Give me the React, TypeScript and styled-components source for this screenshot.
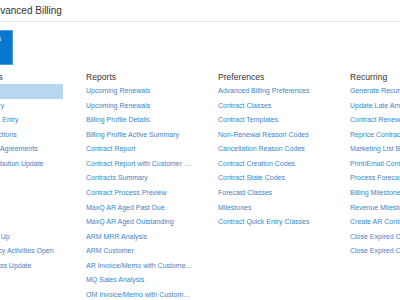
import styled, { createGlobalStyle } from 'styled-components'

const GlobalStyle = createGlobalStyle`
  html, body {
    margin: 0;
    padding: 0;
    overflow: hidden;
    background: #ffffff;
  }
  body {
    font-family: "Liberation Sans", Arial, sans-serif;
  }
`

const Page = styled.div`
  margin-left: -50px;
  width: 600px;
`

const Header = styled.header`
  height: 21px;
  border-bottom: 1px solid #e6e6e6;
  padding-left: 38px;
  display: flex;
  align-items: center;
`

const Title = styled.h1`
  margin: 0;
  font-size: 10px;
  font-weight: 400;
  color: #333333;
  line-height: 22px;
`

const Body = styled.div`
  padding-top: 8px;
`

const Tile = styled.div`
  margin-left: 4px;
  width: 59px;
  height: 35px;
  box-sizing: border-box;
  background: #0a78cf;
  border: 1px solid #4a9ee0;
  padding: 4px 3px;
  color: #ffffff;
  font-size: 7px;
  line-height: 8px;
  white-space: nowrap;
`

const Columns = styled.div`
  display: grid;
  grid-template-columns: repeat(4, 132px);
  margin-top: 5px;
`

const Column = styled.section`
  display: flex;
  flex-direction: column;
`

const Heading = styled.h2`
  margin: 0;
  padding-left: 4px;
  font-size: 8.6px;
  font-weight: 400;
  color: #333333;
  line-height: 14px;
`

const Item = styled.a<{ $active?: boolean }>`
  display: block;
  width: 113px;
  box-sizing: border-box;
  padding: 0 2px 0 4px;
  font-size: 7px;
  line-height: 14.57px;
  color: #3a86c8;
  text-decoration: none;
  white-space: nowrap;
  overflow: hidden;
  text-overflow: ellipsis;
  background: ${({ $active }) => ($active ? '#b7d7f1' : 'transparent')};
`

const groups: { title: string; items: string[] }[] = [
  {
    title: 'Transactions',
    items: [
      'Dashboard',
      'Contract History',
      'Quick Contract Entry',
      'Contract Collections',
      'Contract Price Agreements',
      'Revenue Distribution Update',
      'Contracts',
      'Invoices',
      'Credits',
      'Renewals',
      'Quotes Follow Up',
      'Collection Policy Activities Open',
      'Agreement Mass Update',
    ],
  },
  {
    title: 'Reports',
    items: [
      'Upcoming Renewals',
      'Upcoming Renewals',
      'Billing Profile Details',
      'Billing Profile Active Summary',
      'Contract Report',
      'Contract Report with Customer Details',
      'Contracts Summary',
      'Contract Process Preview',
      'MaxQ AR Aged Past Due',
      'MaxQ AR Aged Outstanding',
      'ARM MRR Analysis',
      'ARM Customer',
      'AR Invoice/Memo with Customer Details',
      'MQ Sales Analysis',
      'OM Invoice/Memo with Customer Details',
    ],
  },
  {
    title: 'Preferences',
    items: [
      'Advanced Billing Preferences',
      'Contract Classes',
      'Contract Templates',
      'Non-Renewal Reason Codes',
      'Cancellation Reason Codes',
      'Contract Creation Codes',
      'Contract State Codes',
      'Forecast Classes',
      'Milestones',
      'Contract Quick Entry Classes',
    ],
  },
  {
    title: 'Recurring',
    items: [
      'Generate Recurring Invoices',
      'Update Late Amendments',
      'Contract Renewals',
      'Reprice Contracts',
      'Marketing List Builder',
      'Print/Email Contracts',
      'Process Forecasts',
      'Billing Milestones',
      'Revenue Milestones',
      'Create AR Contracts',
      'Close Expired Contracts',
      'Close Expired Contract Lines',
    ],
  },
]

export default function App() {
  return (
    <>
      <GlobalStyle />
      <Page>
        <Header>
          <Title>Advanced Billing</Title>
        </Header>
        <Body>
          <Tile>Billing Actions</Tile>
          <Columns>
            {groups.map((group, gi) => (
              <Column key={group.title}>
                <Heading>{group.title}</Heading>
                {group.items.map((item, i) => (
                  <Item key={i} href="#" $active={gi === 0 && i === 0}>
                    {item}
                  </Item>
                ))}
              </Column>
            ))}
          </Columns>
        </Body>
      </Page>
    </>
  )
}
